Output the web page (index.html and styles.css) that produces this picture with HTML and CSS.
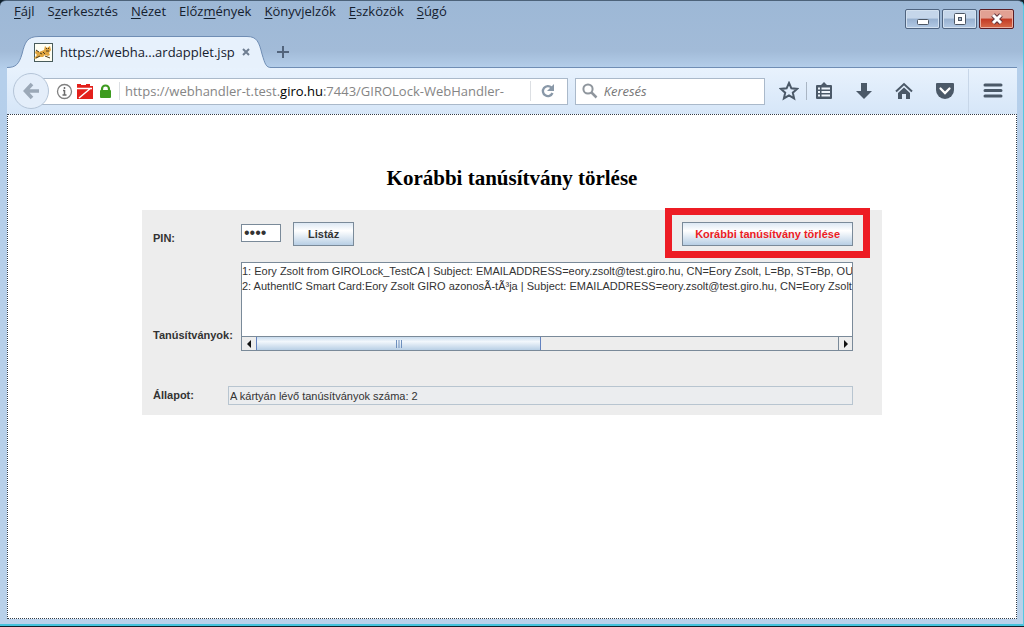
FILE: index.html
```html
<!DOCTYPE html>
<html lang="hu">
<head>
<meta charset="utf-8">
<title>Korábbi tanúsítvány törlése</title>
<link rel="stylesheet" href="styles.css">
</head>
<body>
<div class="window">
  <header class="titlebar">
    <div class="topline">
      <nav class="menu">
        <button class="menu-item"><u>F</u>ájl</button>
        <button class="menu-item">S<u>z</u>erkesztés</button>
        <button class="menu-item"><u>N</u>ézet</button>
        <button class="menu-item">Előz<u>m</u>ények</button>
        <button class="menu-item"><u>K</u>önyvjelzők</button>
        <button class="menu-item"><u>E</u>szközök</button>
        <button class="menu-item"><u>S</u>úgó</button>
      </nav>
      <div class="controls">
        <button class="control" aria-label="Kis méret"><svg width="14" height="14" viewBox="0 0 14 14"><rect x="1.500" y="7.500" width="11" height="5" rx="1" fill="#fff" stroke="#4b5563"/></svg></button>
        <button class="control" aria-label="Előző méret"><svg width="14" height="14" viewBox="0 0 14 14"><rect x="1.500" y="1.500" width="11" height="11" rx="1" fill="#fff" stroke="#4b5563"/><rect x="5.500" y="5.500" width="3" height="3" fill="#a9b8cc" stroke="#4b5563"/></svg></button>
        <button class="control control-close" aria-label="Bezárás"><svg width="14" height="14" viewBox="0 0 14 14"><path d="M3 3l8 8M11 3l-8 8" stroke="#64343a" stroke-width="5"/><path d="M3 3l8 8M11 3l-8 8" stroke="#fff" stroke-width="3"/></svg></button>
      </div>
    </div>
    <div class="tabs">
      <div class="tab">
        <svg class="tab-shape" viewBox="0 0 264 32" preserveAspectRatio="none"><path d="M0 32V31.500C9 31.500 12 28 15 18C18 6 20 .5 32 .5H240C250 .5 252 6 255 18C258 28 259 31.500 264 31.500V32Z" fill="#e7f1fc"/><path d="M0 31.500C9 31.500 12 28 15 18C18 6 20 .5 32 .5H240C250 .5 252 6 255 18C258 28 259 31.500 264 31.500" fill="none" stroke="#6f8db4"/></svg>
        <svg class="favicon" width="19" height="19" viewBox="0 0 19 19"><rect x=".5" y=".5" width="18" height="18" fill="#fffef3" stroke="#485b5b"/><path d="M2 7l3 2 5-2 1-4 2 2 3-2 1 4-2 3 1 2-2 1-3-1-2 2-4 0-4 2-1-1 3-3-2-2Z" fill="#e0a540"/><path d="M2 7l3 2M6 10l2 1M12 5l1 1M15 5l-1 1M12 8l3 0M2 15l4-2M11 13l5 2M9 9l2 2" stroke="#4c3d20"/></svg>
        <span class="tab-title">https://webha...ardapplet.jsp</span>
        <button class="plain tab-close" aria-label="Lap bezárása"><svg width="8" height="8" viewBox="0 0 8 8"><path d="M1 1l6 6M7 1L1 7" stroke="#6f7e91" stroke-width="2"/></svg></button>
      </div>
      <button class="plain new-tab" aria-label="Új lap"><svg width="12" height="12" viewBox="0 0 12 12"><path d="M6 0v12M0 6h12" stroke="#52647c" stroke-width="2"/></svg></button>
    </div>
  </header>

  <div class="toolbar">
    <button class="back" aria-label="Vissza"><svg width="18" height="18" viewBox="0 0 18 18"><path d="M10 2L3.500 9l6.500 7M3.500 9h13.500" fill="none" stroke="#9ba8b7" stroke-width="3.600"/></svg></button>
    <div class="address">
      <svg width="17" height="17" viewBox="0 0 17 17"><circle cx="8.500" cy="8.500" r="7" fill="none" stroke="#808080" stroke-width="1.300"/><path d="M8.500 7v5M8.500 4v2M6.500 12h4M7 7.500h1.500" stroke="#6b6b6b" stroke-width="1.500"/></svg>
      <svg width="17" height="17" viewBox="0 0 17 17"><path d="M1 4V1h4v1h5V1h4v2h3v13H1Z" fill="#e3201b"/><path d="M3 15L15 5M1 5.500h15" stroke="#fff" stroke-width="1.500"/></svg>
      <svg class="lock" width="13" height="15" viewBox="0 0 13 15"><path d="M3 7V5a3.500 3.500 0 0 1 7 0v2" fill="none" stroke="#3d9b1f" stroke-width="2.200"/><rect x="1" y="6" width="11" height="8" rx="1" fill="#3d9b1f"/></svg>
      <span class="url">https://webhandler-t.test.<b>giro.hu</b>:7443/GIROLock-WebHandler-</span>
      <button class="plain reload" aria-label="Frissítés"><svg width="14" height="14" viewBox="0 0 14 14"><path d="M10.500 3.600A5 5 0 1 0 11.500 9" fill="none" stroke="#8998a8" stroke-width="2.300"/><path d="M13 0v7H6Z" fill="#8998a8"/></svg></button>
    </div>
    <label class="search">
      <svg width="16" height="16" viewBox="0 0 16 16"><circle cx="6" cy="6" r="4.600" fill="none" stroke="#8f969d" stroke-width="2"/><path d="M9.500 9.500l5 5" stroke="#8f969d" stroke-width="2.500"/></svg>
      <input class="search-input" type="text" placeholder="Keresés" aria-label="Keresés">
    </label>
    <div class="tools">
      <button class="plain" aria-label="Könyvjelző"><svg width="20" height="20" viewBox="0 0 20 20"><path d="M10 2l2.400 5.300 5.700.6-4.300 3.800 1.300 5.700-5.100-3-5.100 3 1.300-5.700-4.300-3.800 5.700-.6Z" fill="none" stroke="#4b5968" stroke-width="2"/></svg></button>
      <span class="divider"></span>
      <button class="plain" aria-label="Könyvjelzők"><svg width="18" height="18" viewBox="0 0 18 18"><path d="M1 4q0-1 1-1h4l3-3 3 3h4q1 0 1 1v12q0 1-1 1H2q-1 0-1-1Z" fill="#4b5968"/><path d="M3 6.500h2M3 10h2M3 13.500h2M6.500 6.500h8.500M6.500 10h8.500M6.500 13.500h8.500" stroke="#eef5fc" stroke-width="2"/></svg></button>
      <button class="plain" aria-label="Letöltések"><svg width="18" height="18" viewBox="0 0 18 18"><path d="M6 1h6v8h5l-8 8-8-8h5Z" fill="#4b5968"/></svg></button>
      <button class="plain" aria-label="Kezdőlap"><svg width="18" height="18" viewBox="0 0 18 18"><path d="M1 9.500L9 2l8 7.500" fill="none" stroke="#4b5968" stroke-width="2"/><path d="M3 11l6-5.500 6 5.500v6h-4v-5H7v5H3Z" fill="#4b5968"/></svg></button>
      <button class="plain" aria-label="Pocket"><svg width="20" height="18" viewBox="0 0 20 18"><path d="M2 1h16q1 0 1 1v6a9 9 0 0 1-18 0V2q0-1 1-1Z" fill="#4b5968"/><path d="M5.500 6.500L10 11l4.500-4.500" fill="none" stroke="#fff" stroke-width="2.300" stroke-linecap="round"/></svg></button>
    </div>
    <button class="plain main-menu" aria-label="Menü"><svg width="20" height="18" viewBox="0 0 20 18"><path d="M2 3h16M2 8.500h16M2 14h16" stroke="#4b5968" stroke-width="3" stroke-linecap="round"/></svg></button>
  </div>

  <main class="page">
    <h1 class="title">Korábbi tanúsítvány törlése</h1>
    <form class="panel">
      <div class="row">
        <label class="label label-pin" for="pin">PIN:</label>
        <input class="pin" id="pin" type="password" value="1234">
        <button class="button" type="button">Listáz</button>
        <div class="delete"><button class="button button-delete" type="button">Korábbi tanúsítvány törlése</button></div>
      </div>
      <div class="row row-list">
        <span class="label label-list" id="list-label">Tanúsítványok:</span>
        <div class="listbox">
          <ul class="items" aria-labelledby="list-label">
            <li>1: Eory Zsolt from GIROLock_TestCA | Subject: EMAILADDRESS=eory.zsolt@test.giro.hu, CN=Eory Zsolt, L=Bp, ST=Bp, OU=</li>
            <li>2: AuthentIC Smart Card:Eory Zsolt GIRO azonosÃ-tÃ³ja | Subject: EMAILADDRESS=eory.zsolt@test.giro.hu, CN=Eory Zsolt,</li>
          </ul>
          <div class="scrollbar">
            <button class="plain arrow" type="button" aria-label="Balra"><svg width="6" height="8" viewBox="0 0 6 8"><path d="M5 0v8L1 4Z" fill="#111"/></svg></button>
            <div class="track"><div class="thumb"><svg width="6" height="8" viewBox="0 0 6 8"><path d="M.5 0v8M3 0v8M5.500 0v8" stroke="#6e8fbd"/></svg></div></div>
            <button class="plain arrow arrow-right" type="button" aria-label="Jobbra"><svg width="6" height="8" viewBox="0 0 6 8"><path d="M1 0v8l4-4Z" fill="#111"/></svg></button>
          </div>
        </div>
      </div>
      <div class="row row-status">
        <label class="label label-status" for="status">Állapot:</label>
        <input class="status" id="status" type="text" readonly value="A kártyán lévő tanúsítványok száma: 2">
      </div>
    </form>
  </main>
</div>
</body>
</html>
```
FILE: styles.css
```css
* { box-sizing: border-box; }
html, body { height: 100%; }
body {
  margin: 0;
  background: #10202c;
  font-family: "Open Sans", "Noto Sans", sans-serif;
  font-size: 13px;
  color: #14202e;
}
svg { display: block; flex: none; }
button, input { font: inherit; color: inherit; }
.plain { background: none; border: 0; padding: 0; }

.window {
  height: calc(100vh - 1px);
  display: flex;
  flex-direction: column;
  padding: 0 6px 5px 7px;
  border-top: 1px solid #4c6279;
  border-right: 1px solid #55c8e0;
  border-bottom: 2px solid #45c3dc;
  border-radius: 6px 6px 0 0;
  background: linear-gradient(#9db8d6, #a2bbd8 50px, #b5cfeb 68px, #b9d1ea);
}

.titlebar { display: flex; flex-direction: column; height: 67px; }
.topline { display: flex; justify-content: space-between; height: 35px; }
.menu { display: flex; align-items: flex-start; gap: 13px; padding-left: 7px; }
.menu-item {
  height: 20px;
  padding: 0;
  border: 0;
  background: none;
  line-height: 20px;
}
.menu-item u { text-underline-offset: 2px; }
.controls { display: flex; gap: 2px; padding: 8px 3px 0 0; }
.control {
  display: flex;
  align-items: center;
  justify-content: center;
  width: 35px;
  height: 20px;
  padding: 0;
  border: 1px solid #4f6480;
  border-radius: 2px;
  background: linear-gradient(#c5d6ea 0 45%, #98b1d0 50%, #b3cae5);
  box-shadow: inset 0 0 0 1px #d3e1f0;
}
.control-close {
  border-color: #5a1d24;
  background: linear-gradient(#e2a193 0 45%, #c33a24 50%, #d76c4a);
  box-shadow: inset 0 0 0 1px #e9b0a2;
}

.tabs { display: flex; align-items: flex-end; gap: 6px; height: 32px; border-bottom: 1px solid #6f8db4; }
.tab {
  position: relative;
  display: flex;
  align-items: center;
  width: 264px;
  height: 32px;
  margin-bottom: -1px;
  padding: 0 21px 0 27px;
}
.tab-shape { position: absolute; inset: 0; width: 100%; height: 100%; }
.favicon, .tab-title, .tab-close { position: relative; }
.tab-title { flex: 1; margin-left: 7px; white-space: nowrap; }
.new-tab { height: 30px; }

.toolbar {
  display: flex;
  align-items: center;
  height: 46px;
  padding-left: 6px;
  background: linear-gradient(#e8f2fd, #d6e6f8);
}
.back {
  z-index: 1;
  display: flex;
  align-items: center;
  justify-content: center;
  width: 36px;
  height: 36px;
  padding: 0;
  border: 1px solid #b5c5d8;
  border-radius: 50%;
  background: #e4eefa;
}
.address {
  flex: 14 1 0;
  display: flex;
  align-items: center;
  gap: 3px;
  height: 27px;
  margin-left: -8px;
  padding-left: 14px;
  border: 1px solid #aab9ca;
  background: #fff;
}
.lock { margin-left: 3px; }
.url {
  flex: 1;
  margin-left: 4px;
  padding-left: 5px;
  border-left: 1px solid #dcdfe3;
  color: #858585;
  white-space: nowrap;
  overflow: hidden;
}
.url b { font-weight: 400; color: #000; }
.reload { display: flex; align-items: center; height: 20px; padding: 0 12px 0 10px; border-left: 1px solid #dcdfe3; }
.search {
  flex: 5 1 0;
  display: flex;
  align-items: center;
  gap: 6px;
  height: 27px;
  margin-left: 7px;
  padding-left: 6px;
  border: 1px solid #aab9ca;
  background: #fff;
}
.search-input { width: 100%; min-width: 0; padding: 0; border: 0; outline: 0; background: none; font-style: italic; }
.search-input::placeholder { color: #777; }
.tools { display: flex; align-items: center; gap: 22px; padding: 0 13px 0 14px; }
.divider { width: 1px; height: 18px; margin: 0 -14px 0 -15px; background: #a9b5c3; }
.main-menu { display: flex; align-items: center; height: 44px; padding: 0 14px; border-left: 1px solid #c7d6e8; }

.page {
  flex: 1;
  padding: 50px 16px 16px;
  border: 1px dotted #333c48;
  background: #fff;
}
.title {
  margin: 0;
  font: bold 21px/26px "Liberation Serif", serif;
  text-align: center;
  color: #000;
}
.panel {
  max-width: 740px;
  margin: 19px auto 0;
  padding: 12px 29px 10px 11px;
  background: #ededed;
  font: 11px/15px "Liberation Sans", sans-serif;
  color: #333;
}
.row { display: flex; align-items: flex-start; }
.label { flex: none; font-weight: bold; }
.label-pin { width: 88px; margin-top: 9px; }
.pin {
  width: 40px;
  height: 18px;
  margin: 2px 12px 0 0;
  padding: 0 2px;
  border: 1px solid #7a8a99;
  background: #fff;
  font-size: 16px;
}
.button {
  height: 24px;
  padding: 0 14px;
  border: 1px solid #7a8a99;
  background: linear-gradient(#dde8f3, #fff 35%, #b8cfe5);
  font-weight: bold;
}
.delete {
  position: relative;
  margin-left: auto;
}
.delete::after {
  content: "";
  position: absolute;
  inset: -14px -17px -12px;
  border: 7px solid #ed1c24;
  pointer-events: none;
}
.button-delete { display: block; padding: 0 12px; color: #ed1c24; }
.row-list { margin-top: 16px; }
.label-list { width: 88px; margin-top: 66px; }
.listbox { flex: 1; min-width: 0; border: 1px solid #7a8a99; background: #fff; }
.items { height: 73px; margin: 0; padding: 1px 0; overflow: hidden; list-style: none; white-space: nowrap; }
.scrollbar { display: flex; height: 14px; border-top: 1px solid #7a8a99; background: #ededed; }
.arrow { display: flex; align-items: center; justify-content: center; width: 14px; }
.arrow-right { border-left: 1px solid #7a8a99; }
.track { flex: 1; }
.thumb {
  display: flex;
  align-items: center;
  justify-content: center;
  width: 49%;
  height: 100%;
  border: solid #6382bf;
  border-width: 0 1px;
  background: linear-gradient(#c9dcee, #f2f7fc 35%, #b8cfe5);
}
.row-status { margin-top: 35px; }
.label-status { width: 75px; margin-top: 2px; }
.status {
  flex: 1;
  height: 19px;
  min-width: 0;
  padding: 0 1px;
  border: 1px solid #b8c5d0;
  background: #ebedef;
}
```
